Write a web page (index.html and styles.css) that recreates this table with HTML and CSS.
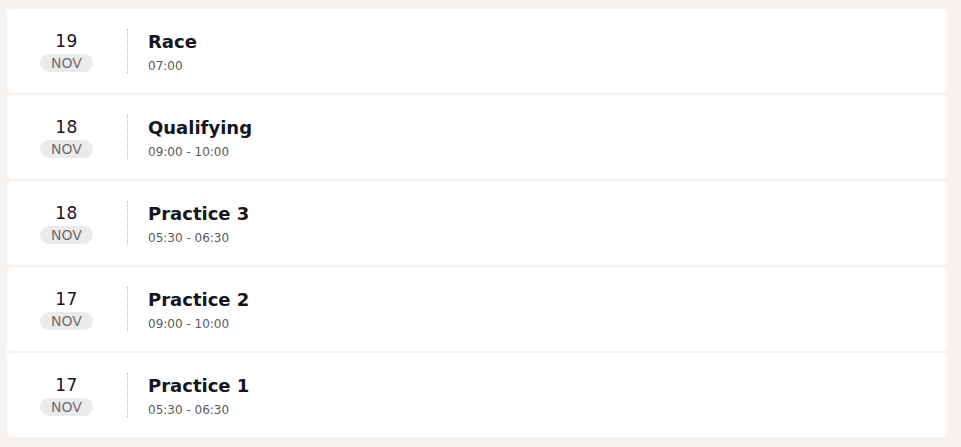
FILE: index.html
```html
<!DOCTYPE html>
<html>
<head>
<meta charset="utf-8">
<link rel="stylesheet" href="styles.css">
</head>
<body>
<div class="list">
  <div class="card">
    <div class="date"><span class="day">19</span><span class="month">NOV</span></div>
    <div class="divider"></div>
    <div class="info"><div class="title">Race</div><div class="time">07:00</div></div>
  </div>
  <div class="card">
    <div class="date"><span class="day">18</span><span class="month">NOV</span></div>
    <div class="divider"></div>
    <div class="info"><div class="title">Qualifying</div><div class="time">09:00 - 10:00</div></div>
  </div>
  <div class="card">
    <div class="date"><span class="day">18</span><span class="month">NOV</span></div>
    <div class="divider"></div>
    <div class="info"><div class="title">Practice 3</div><div class="time">05:30 - 06:30</div></div>
  </div>
  <div class="card">
    <div class="date"><span class="day">17</span><span class="month">NOV</span></div>
    <div class="divider"></div>
    <div class="info"><div class="title">Practice 2</div><div class="time">09:00 - 10:00</div></div>
  </div>
  <div class="card">
    <div class="date"><span class="day">17</span><span class="month">NOV</span></div>
    <div class="divider"></div>
    <div class="info"><div class="title">Practice 1</div><div class="time">05:30 - 06:30</div></div>
  </div>
</div>
</body>
</html>
```
FILE: styles.css
```css
html, body {
  margin: 0;
  padding: 0;
  background: #f5f2ef;
  font-family: "DejaVu Sans", sans-serif;
  color: #15151e;
}
.list {
  padding: 9px 14px 10px 7px;
  display: flex;
  flex-direction: column;
  gap: 2px;
}
.card {
  background: #ffffff;
  border-radius: 5px;
  height: 84px;
  display: flex;
  align-items: center;
}
.date {
  margin-left: 33px;
  width: 53px;
  display: flex;
  flex-direction: column;
  align-items: center;
  gap: 3px;
}
.day {
  font-size: 17px;
  line-height: 20px;
  letter-spacing: 0.5px;
  color: #15151e;
}
.month {
  width: 53px;
  height: 18px;
  line-height: 18px;
  border-radius: 9px;
  background: #ebebeb;
  color: #6e6e6e;
  font-size: 14px;
  text-align: center;
}
.divider {
  margin-left: 34px;
  height: 44px;
  border-left: 1px dotted #bdbdbd;
}
.info {
  margin-left: 20px;
  padding-top: 2px;
  display: flex;
  flex-direction: column;
  gap: 6px;
}
.title {
  font-weight: bold;
  font-size: 18px;
  line-height: 22px;
}
.time {
  font-size: 12px;
  line-height: 14px;
  color: #5a5a5a;
}
```
